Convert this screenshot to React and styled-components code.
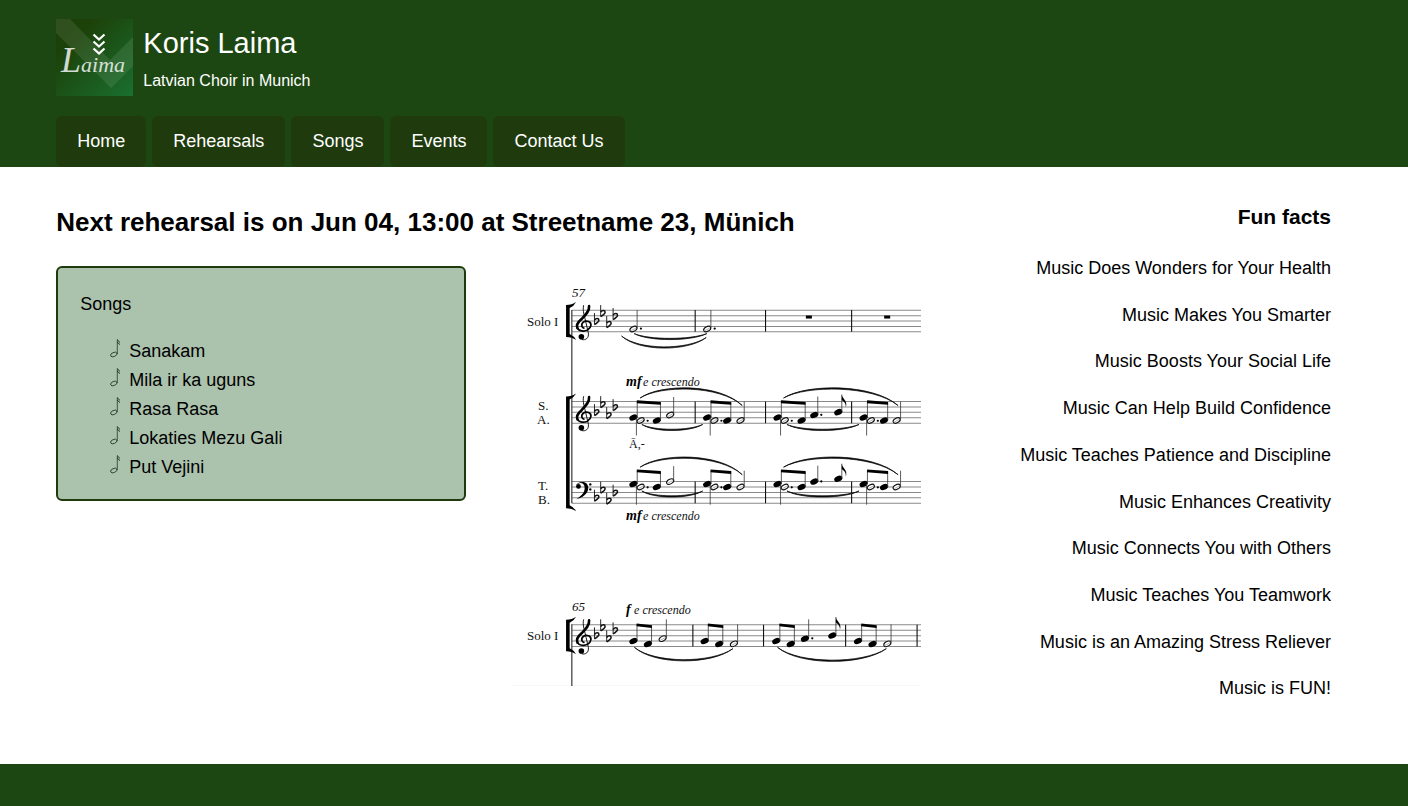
import React from "react";
import styled, { createGlobalStyle } from "styled-components";

const colors = {
  bar: "#1d4712",
  tab: "#1f3b0d",
  panel: "#abc2ad",
  light: "#ffffff",
};

const GlobalStyle = createGlobalStyle`
  *, *::before, *::after { box-sizing: border-box; }
  body {
    margin: 0;
    font-family: "Liberation Sans", Arial, sans-serif;
    font-size: 18px;
    color: #000;
    background: #fff;
  }
  h1, h2, h3, p, ul { margin: 0; padding: 0; }
  ul { list-style: none; }
`;

const Page = styled.div`
  display: flex;
  flex-direction: column;
  min-height: 100vh;
`;

const Header = styled.header`
  padding: 19px 4% 0;
  background: ${colors.bar};
  color: ${colors.light};
`;

const Brand = styled.div`
  display: flex;
  gap: 10px;
`;

const BrandText = styled.div`
  padding-top: 8px;
`;

const SiteTitle = styled.h1`
  font-size: 29px;
  font-weight: 400;
  line-height: 32px;
`;

const Tagline = styled.p`
  margin-top: 12px;
  font-size: 16px;
  line-height: 20px;
`;

const Nav = styled.nav`
  display: flex;
  flex-wrap: wrap;
  gap: 6px;
  margin-top: 20px;
`;

const NavLink = styled.a`
  padding: 15px 21px 16px;
  border-radius: 6px;
  line-height: 20px;
  color: ${colors.light};
  background: ${colors.tab};
  text-decoration: none;
`;

const Main = styled.main`
  display: grid;
  grid-template-columns: 9fr 9fr 8fr;
  grid-template-rows: auto 1fr;
  grid-template-areas:
    "next next facts"
    "songs score facts";
  column-gap: 46px;
  padding: 40px 77px 66px 4%;
`;

const NextRehearsal = styled.h2`
  grid-area: next;
  margin-bottom: 29px;
  font-size: 26px;
  line-height: 30px;
`;

const SongPanel = styled.section`
  grid-area: songs;
  align-self: start;
  padding: 26px 22px 17px;
  border: 2px solid ${colors.tab};
  border-radius: 6px;
  background: ${colors.panel};
`;

const PanelTitle = styled.p`
  line-height: 20px;
`;

const SongList = styled.ul`
  margin-top: 23px;
  padding-left: 30px;
`;

const Song = styled.li`
  display: flex;
  align-items: flex-start;
  gap: 8px;
  line-height: 29px;

  svg {
    margin-top: 2px;
  }
`;

const Score = styled.figure`
  grid-area: score;
  margin: 0 0 12px;

  svg {
    display: block;
    width: 100%;
    height: auto;
  }
`;

const Facts = styled.aside`
  grid-area: facts;
  display: flex;
  flex-direction: column;
  text-align: right;
`;

const FactsTitle = styled.h3`
  margin-bottom: 32px;
  font-size: 21px;
  line-height: 19px;
`;

const FactList = styled.ul`
  display: flex;
  flex: 1;
  flex-direction: column;
  justify-content: space-between;
  gap: 24px;
  line-height: 20px;
`;

const Footer = styled.footer`
  flex: 1;
  min-height: 42px;
  background: ${colors.bar};
`;

function Logo() {
  return (
    <svg width="77" height="77" viewBox="0 0 77 77" role="img" aria-label="Laima">
      <defs>
        <linearGradient id="logoBg" x1="0" y1="0" x2="1" y2="1">
          <stop offset="0" stopColor="#1c3d08" />
          <stop offset="0.25" stopColor="#1c4209" />
          <stop offset="1" stopColor="#1a7030" />
        </linearGradient>
      </defs>
      <rect width="77" height="77" fill="url(#logoBg)" />
      <path d="M0 0H14L54 41L77 18V47L55 69L0 14Z" fill="#fff" opacity="0.09" />
      <g fill="none" stroke="#fff" strokeWidth="2.2">
        <path d="M37.5 15.5L43 20.5L48.5 15.5" />
        <path d="M37.5 22.5L43 27.5L48.5 22.5" />
        <path d="M37.5 29.5L43 34.5L48.5 29.5" />
      </g>
      <text
        x="5"
        y="53"
        fill="#fff"
        opacity="0.8"
        fontFamily='"Liberation Serif", cursive'
        fontStyle="italic"
        fontSize="36"
      >
        L<tspan fontSize="22">aima</tspan>
      </text>
    </svg>
  );
}

function NoteBullet() {
  return (
    <svg width="11" height="19" viewBox="0 0 11 19" aria-hidden="true" fill="none" stroke="#26352a">
      <ellipse cx="3.8" cy="15.5" rx="3.4" ry="2" transform="rotate(-25 3.8 15.5)" strokeWidth="0.8" />
      <path d="M7.3 15V0.5" strokeWidth="0.8" />
      <path d="M7 0.6L10 3.4M7 3L10 5.6" strokeWidth="1" />
    </svg>
  );
}

const Staff = ({ top }) => (
  <g stroke="#8a8a8a" strokeWidth="1">
    {[0, 5.4, 10.8, 16.2, 21.6].map((d) => (
      <path key={d} d={`M572 ${top + d}H921`} />
    ))}
  </g>
);

const Bracket = ({ top, bottom }) => (
  <path
    d={`M566 ${top - 1}Q572 ${top - 1} 576 ${top - 4}Q574 ${top} 569.6 ${top + 2}V${bottom - 2}Q574 ${bottom} 576 ${bottom + 4}Q572 ${bottom + 1} 566 ${bottom + 1}Z`}
  />
);

const Flat = ({ x, y }) => (
  <g transform={`translate(${x} ${y})`} fill="none" stroke="#111">
    <path d="M0 -11.5V0" strokeWidth="0.9" />
    <path d="M0 -4.4C1.6 -6.6 4.4 -6.4 4.4 -4.4C4.4 -2.8 2 -1.2 0 0" strokeWidth="1.5" />
  </g>
);

const Flats = ({ top }) => (
  <>
    <Flat x={594.4} y={top + 14.5} />
    <Flat x={600.6} y={top + 6.5} />
    <Flat x={606.6} y={top + 17.5} />
    <Flat x={613} y={top + 9.5} />
  </>
);

const TrebleClef = ({ top }) => (
  <g transform={`translate(572 ${top})`} fill="none" stroke="#000" strokeLinecap="round">
    <path
      d="M17 -4C17.6 1 13.5 5 9.5 9C5.2 12.6 4 15.4 5.4 18.2"
      strokeWidth="2.6"
    />
    <path
      d="M5.4 18.2C7 21.2 12 21.8 15.4 20C19.6 17.4 20 12.8 16.5 11.4C12.5 10 8.6 13 10 16.6C10.4 17.4 11 17.9 11.8 18"
      strokeWidth="1.7"
    />
    <path d="M11.5 -4.5C10 0 13 8 14 13L16.3 23C17 28 13.5 30.5 10 29.5" strokeWidth="0.9" />
    <circle cx="9.3" cy="26.7" r="2.8" fill="#000" stroke="none" />
  </g>
);

const BassClef = ({ top }) => (
  <g transform={`translate(572 ${top})`}>
    <circle cx="6.4" cy="4.8" r="2.4" />
    <path d="M4 4.4C5 -0.8 16.2 -1.4 16.2 6.2C16.2 12.4 10 16.4 4.3 17.6C9 14.6 12.6 11.5 12.6 6.5C12.6 0.3 6.5 0 4 4.4Z" />
    <circle cx="18.2" cy="2.8" r="1.2" />
    <circle cx="18.2" cy="7.8" r="1.2" />
  </g>
);

const Head = ({ x, y }) => (
  <ellipse cx={x} cy={y} rx="4.3" ry="2.8" transform={`rotate(-24 ${x} ${y})`} />
);

const OpenHead = ({ x, y }) => (
  <g transform={`translate(${x} ${y}) rotate(-28)`}>
    <ellipse rx="3.8" ry="2.3" fill="#fff" stroke="#111" strokeWidth="1.1" />
    <path d="M-2.8 0.3H2.8" stroke="#777" strokeWidth="0.5" />
  </g>
);

const Dot = ({ x, y }) => <circle cx={x} cy={y} r="1.1" />;

const Stem = ({ x, from, to }) => <path d={`M${x} ${from}V${to}`} stroke="#333" strokeWidth="0.8" />;

const Beam = ({ x1, x2, y }) => <path d={`M${x1} ${y - 1.2}L${x2} ${y + 0.4}V${y + 3.2}L${x1} ${y + 1.6}Z`} />;

const Hook = ({ x, y }) => (
  <path d={`M${x} ${y}C${x} ${y + 4} ${x + 6.4} ${y + 6} ${x + 4} ${y + 13}C${x + 4.5} ${y + 8} ${x + 1} ${y + 6.4} ${x} ${y + 5.4}Z`} />
);

const Bar = ({ x, top }) => <path d={`M${x} ${top}V${top + 21.6}`} stroke="#111" strokeWidth="1.1" />;

/* A slur is a thin crescent: two cubic curves that share their ends. */
const Slur = ({ x1, y1, x2, y2, peak }) => {
  const w = x2 - x1;
  const mid = (y1 + y2) / 2;
  const ctl = mid + ((peak - mid) * 4) / 3;
  const inner = ctl + (peak < mid ? 1.6 : -1.6);
  const a = x1 + w * 0.2;
  const b = x2 - w * 0.22;
  return (
    <path
      d={`M${x1} ${y1}C${a} ${ctl} ${b} ${ctl} ${x2} ${y2}C${b} ${inner} ${a} ${inner} ${x1} ${y1}Z`}
      stroke="#111"
      strokeWidth="0.8"
    />
  );
};

/* Two voices on one staff: `n` is the line of the lower heads, `b` that of the beams. */
function ChoirPart({ top, n, b }) {
  const groups = [
    { x: 633.3, gap: 23.4 },
    { x: 707, gap: 20 },
    { x: 777.3, gap: 24 },
    { x: 863.3, gap: 20.4 },
  ];
  return (
    <g>
      {[695, 765.3, 851.3].map((x) => (
        <Bar key={x} x={x} top={top} />
      ))}
      {groups.map(({ x, gap }) => (
        <g key={x}>
          <OpenHead x={x + 7.2} y={n} />
          <Head x={x} y={n - 3} />
          <Dot x={x + 14.2} y={n + 0.3} />
          <Head x={x + gap} y={n} />
          <Stem x={x + 3.8} from={b} to={n - 3} />
          <Stem x={x + gap + 3.6} from={b + 1} to={n} />
          <Stem x={x + 3} from={n - 3} to={b + 34} />
          <Beam x1={x + 3.4} x2={x + gap + 4} y={b} />
        </g>
      ))}
      <OpenHead x={670} y={n - 5.4} />
      <Stem x={673.5} from={b - 4.5} to={n - 6} />
      <OpenHead x={740.3} y={n} />
      <Stem x={744} from={b} to={n - 1} />
      <Head x={814} y={n - 5.4} />
      <Stem x={817.5} from={b - 5} to={n - 6} />
      <Dot x={821} y={n - 5.6} />
      <Head x={838} y={n - 8.3} />
      <Stem x={841.5} from={b - 7} to={n - 9} />
      <Hook x={841.5} y={b - 7} />
      <OpenHead x={896.3} y={n} />
      <Stem x={900.2} from={b} to={n - 1} />
      <Slur x1={640} y1={b - 3.5} x2={742} y2={b + 4} peak={b - 13.5} />
      <Slur x1={783.3} y1={b - 3.5} x2={897.7} y2={b + 4} peak={b - 13.5} />
      <Slur x1={641.7} y1={n + 4} x2={702.5} y2={n + 4} peak={n + 10} />
      <Slur x1={786.7} y1={n + 4} x2={858.7} y2={n + 4} peak={n + 10} />
    </g>
  );
}

function SoloPair({ x }) {
  return (
    <g>
      <Head x={x} y={640.6} />
      <Head x={x + 14.5} y={643.6} />
      <Stem x={x + 3.6} from={624} to={640} />
      <Stem x={x + 18.1} from={625} to={643} />
      <Beam x1={x + 3.2} x2={x + 18.5} y={624.4} />
    </g>
  );
}

function SheetMusic() {
  return (
    <svg viewBox="512 266 409 420" role="img" aria-label="Sheet music for solo, soprano, alto, tenor and bass">
      <path d="M512 685.5H921" stroke="#f0f0f0" />

      <Staff top={310.2} />
      <Staff top={401.4} />
      <Staff top={481.4} />
      <Staff top={624.5} />
      <path d="M571.8 310V503M571.8 624V686" stroke="#111" />
      <Bracket top={306} bottom={336} />
      <Bracket top={397.5} bottom={507} />
      <Bracket top={620.5} bottom={650} />

      <TrebleClef top={310} />
      <TrebleClef top={401} />
      <BassClef top={481.4} />
      <TrebleClef top={624} />
      <Flats top={310} />
      <Flats top={401} />
      <Flats top={486.5} />
      <Flats top={624} />

      {[695, 765.3, 851.3].map((x) => (
        <Bar key={x} x={x} top={310} />
      ))}
      {[633.3, 707].map((x) => (
        <g key={x}>
          <OpenHead x={x} y={329} />
          <Stem x={x + 3.7} from={310} to={328} />
          <Dot x={x + 7.5} y={328.5} />
        </g>
      ))}
      <rect x="805.6" y="315.5" width="6" height="3" />
      <rect x="883.8" y="315.5" width="6" height="3" />
      <Slur x1={634} y1={333.5} x2={706.7} y2={333.5} peak={339.5} />
      <Slur x1={621.5} y1={336} x2={706} y2={337.5} peak={348} />

      <ChoirPart top={401.4} n={420.3} b={401.4} />
      <ChoirPart top={481.4} n={486.8} b={470.5} />

      {[692.7, 763.3, 845.3, 916.7].map((x) => (
        <Bar key={x} x={x} top={624.5} />
      ))}
      {[633.3, 704.5, 776, 857.7].map((x) => (
        <SoloPair key={x} x={x} />
      ))}
      <OpenHead x={662.5} y={638.3} />
      <Stem x={666.2} from={619} to={637} />
      <OpenHead x={733.7} y={643.5} />
      <Stem x={737.4} from={624} to={642} />
      <Head x={804.7} y={638.3} />
      <Stem x={808.4} from={619} to={637} />
      <Dot x={812} y={638} />
      <Head x={832} y={635.2} />
      <Stem x={835.6} from={616.7} to={634} />
      <Hook x={835.6} y={616.7} />
      <OpenHead x={887} y={643.5} />
      <Stem x={890.7} from={624} to={642} />
      <Slur x1={634.3} y1={647} x2={732.7} y2={648.3} peak={660.5} />
      <Slur x1={777.3} y1={647} x2={886} y2={648.3} peak={661} />

      <g fontFamily='"Liberation Serif", serif' fontSize="13" fill="#111">
        <text x="527" y="326">Solo I</text>
        <text x="538" y="410">S.</text>
        <text x="537" y="424">A.</text>
        <text x="538" y="490">T.</text>
        <text x="538" y="504">B.</text>
        <text x="527" y="640">Solo I</text>
        <text x="629" y="448" fontSize="12">Ā,-</text>
        <g fontStyle="italic">
          <text x="572" y="297">57</text>
          <text x="572" y="611">65</text>
          <g fontSize="12">
            <text x="643" y="386">e crescendo</text>
            <text x="643" y="520">e crescendo</text>
            <text x="634" y="614">e crescendo</text>
          </g>
          <g fontSize="14" fontWeight="700" fill="#000">
            <text x="626" y="386">mf</text>
            <text x="626" y="520">mf</text>
            <text x="626" y="614">f</text>
          </g>
        </g>
      </g>
    </svg>
  );
}

const pages = ["Home", "Rehearsals", "Songs", "Events", "Contact Us"];

const songs = ["Sanakam", "Mila ir ka uguns", "Rasa Rasa", "Lokaties Mezu Gali", "Put Vejini"];

const facts = [
  "Music Does Wonders for Your Health",
  "Music Makes You Smarter",
  "Music Boosts Your Social Life",
  "Music Can Help Build Confidence",
  "Music Teaches Patience and Discipline",
  "Music Enhances Creativity",
  "Music Connects You with Others",
  "Music Teaches You Teamwork",
  "Music is an Amazing Stress Reliever",
  "Music is FUN!",
];

export default function App() {
  return (
    <Page>
      <GlobalStyle />
      <Header>
        <Brand>
          <Logo />
          <BrandText>
            <SiteTitle>Koris Laima</SiteTitle>
            <Tagline>Latvian Choir in Munich</Tagline>
          </BrandText>
        </Brand>
        <Nav aria-label="Main">
          {pages.map((name) => (
            <NavLink key={name} href={`#${name.toLowerCase().replace(" ", "-")}`}>
              {name}
            </NavLink>
          ))}
        </Nav>
      </Header>
      <Main>
        <NextRehearsal>Next rehearsal is on Jun 04, 13:00 at Streetname 23, Münich</NextRehearsal>
        <SongPanel>
          <PanelTitle>Songs</PanelTitle>
          <SongList>
            {songs.map((name) => (
              <Song key={name}>
                <NoteBullet />
                {name}
              </Song>
            ))}
          </SongList>
        </SongPanel>
        <Score>
          <SheetMusic />
        </Score>
        <Facts>
          <FactsTitle>Fun facts</FactsTitle>
          <FactList>
            {facts.map((fact) => (
              <li key={fact}>{fact}</li>
            ))}
          </FactList>
        </Facts>
      </Main>
      <Footer />
    </Page>
  );
}
